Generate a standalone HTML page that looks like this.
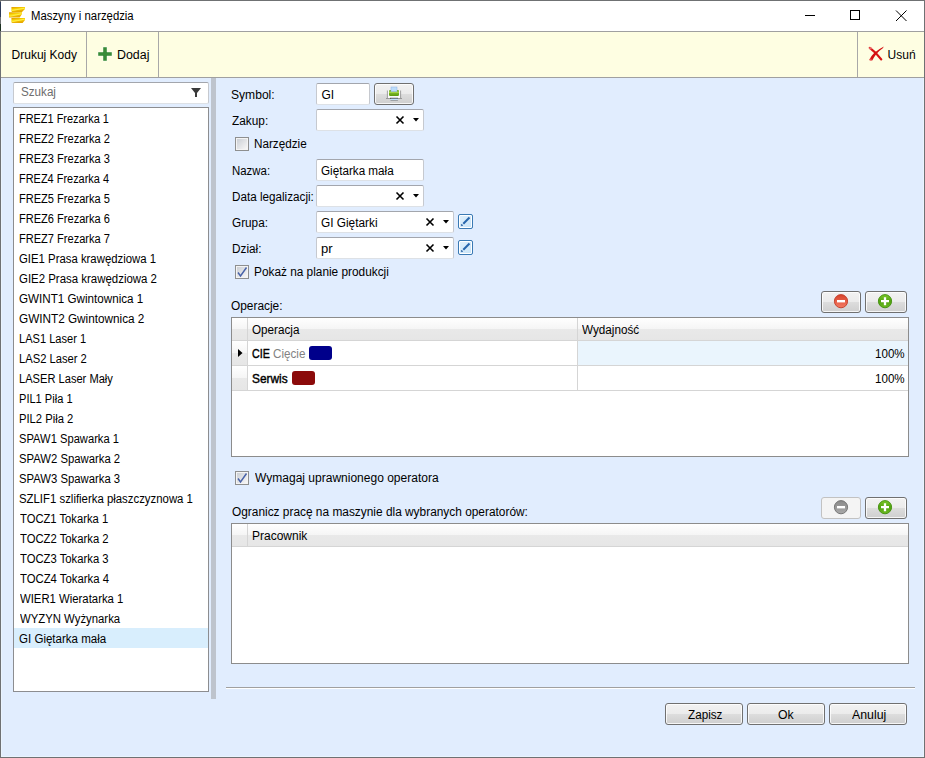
<!DOCTYPE html>
<html><head><meta charset="utf-8">
<style>
*{margin:0;padding:0;box-sizing:border-box}
html,body{width:925px;height:758px;overflow:hidden;background:#e1edfe}
body{position:relative;font-family:"Liberation Sans",sans-serif;font-size:12px;color:#000}
.a{position:absolute}
.t{position:absolute;white-space:nowrap;line-height:15px;font-size:12px;transform-origin:0 0}
.tbox{position:absolute;background:#fff;border:1px solid #c6c9cf;border-top-color:#a3a6ad;border-bottom-color:#dde1e6;border-radius:2px}
.list{position:absolute;background:#fff;border:1px solid #8c8d90}
.btn{position:absolute;border:1px solid #707070;border-radius:3px;background:linear-gradient(#f2f2f2 0%,#ebebeb 50%,#dddddd 50%,#cfcfcf 100%);box-shadow:inset 0 0 0 1px rgba(255,255,255,.8)}
.chk{position:absolute;width:14px;height:14px;border:1px solid #8e8f8f;background:#f4f4f4}
.chk i{position:absolute;left:1px;top:1px;width:10px;height:10px;background:linear-gradient(135deg,#cbcfd5 0%,#f7f7f7 100%)}
.grid{position:absolute;background:#fff;border:1px solid #8c8c8c}
.hd{position:absolute;background:linear-gradient(#ffffff 0%,#f5f5f5 50%,#e9e9e9 50%,#e6e6e6 100%)}
.hl{position:absolute;background:#d5d5d5}
.edit{position:absolute;width:15px;height:15px;border:1px solid #3a7ab4;border-radius:2px;background:linear-gradient(135deg,#e2f1fc,#c6e3f8);box-shadow:inset 0 0 0 1px #fff}
svg{position:absolute;overflow:visible}


</style></head><body>
<!-- window frame -->
<div class="a" style="left:0;top:0;width:925px;height:758px;border:1px solid #6f7173;background:#e1edfe"></div>
<div class="a" style="left:1px;top:78px;width:923px;height:679px;border:1px solid #eaf4fe;border-top:0"></div>
<div class="a" style="left:1px;top:1px;width:923px;height:30px;background:#fff"></div>
<div class="a" style="left:1px;top:31px;width:923px;height:47px;background:#fefee2;border-top:1px solid #a0a0a0;border-bottom:1px solid #a0a0a0"></div>
<div class="a" style="left:86px;top:32px;width:1px;height:45px;background:#a8a8a8"></div>
<div class="a" style="left:158px;top:32px;width:1px;height:45px;background:#a8a8a8"></div>
<div class="a" style="left:857px;top:32px;width:1px;height:45px;background:#a8a8a8"></div>

<!-- app icon -->
<svg style="left:0;top:0" width="30" height="30" viewBox="0 0 30 30">
<defs><linearGradient id="gold" x1="0" y1="0" x2="0.35" y2="1"><stop offset="0" stop-color="#dc9600"/><stop offset="0.3" stop-color="#f2c000"/><stop offset="0.55" stop-color="#ffe81a"/><stop offset="0.75" stop-color="#f0b800"/><stop offset="1" stop-color="#e6a800"/></linearGradient></defs>
<polygon points="11.4,7 25,7 25,9 22,12 12,12 11.4,11" fill="url(#gold)"/>
<polygon points="9,12.2 22,12.2 22,14 19.7,17.6 9,17.6" fill="url(#gold)"/>
<polygon points="11.4,18 25,18 25,20 22.6,23 12,23 11.4,22" fill="url(#gold)"/>
<line x1="12" y1="10.6" x2="24.5" y2="8.2" stroke="#fff45a" stroke-width="0.9" opacity=".85"/>
<line x1="9.5" y1="16.4" x2="21.5" y2="13.8" stroke="#fff45a" stroke-width="0.9" opacity=".85"/>
<line x1="12" y1="21.8" x2="24.5" y2="19.2" stroke="#fff45a" stroke-width="0.9" opacity=".85"/>
</svg>
<div class="a" style="left:0;top:2px;width:1px;height:15px;background:#2c3a58"></div>
<div class="a" style="left:0;top:24px;width:1px;height:7px;background:#1c3020"></div>
<!-- window controls -->
<div class="a" style="left:805px;top:15px;width:10px;height:1px;background:#000"></div>
<div class="a" style="left:850px;top:10px;width:10px;height:10px;border:1px solid #000"></div>
<svg style="left:895px;top:9px" width="13" height="13" viewBox="0 0 13 13"><path d="M1,1.5 L11.5,12 M11.5,1.5 L1,12" stroke="#000" stroke-width="1"/></svg>

<!-- toolbar icons -->
<svg style="left:97px;top:46px" width="16" height="16" viewBox="0 0 16 16">
<path d="M6,1 h4 v5 h5 v4 h-5 v5 h-4 v-5 h-5 v-4 h5 z" fill="#388c38" stroke="#fff" stroke-width="0.6" stroke-opacity=".7"/>
</svg>
<svg style="left:866px;top:44px" width="20" height="20" viewBox="0 0 20 20">
<path d="M3.8,3.9 Q9.5,8 15.2,15.4" stroke="#d81414" stroke-width="2.3" fill="none" stroke-linecap="round"/>
<path d="M17.9,2.5 L16.8,4.2 Q10,8.8 6.2,16.6 L3.2,16.0 Q6.5,8.2 17.9,2.5 Z" fill="#d41010"/>
<circle cx="4.5" cy="4.3" r="1.3" fill="#f07a7a" opacity=".8"/>
<circle cx="4.6" cy="15.8" r="1.2" fill="#f06868" opacity=".7"/>
</svg>

<!-- left panel -->
<div class="tbox" style="left:13px;top:82px;width:196px;height:22px"></div>
<svg style="left:0;top:0" width="1" height="1"><polygon points="191,88 201,88 197,93 197,97 195,97 195,93" fill="#3a3a3a"/></svg>
<div class="list" style="left:13px;top:107px;width:196px;height:585px"></div>
<div class="a" style="left:14px;top:628px;width:194px;height:20px;background:#d8eefd"></div>
<div class="a" style="left:211px;top:78px;width:5px;height:621px;background:#bec4cd"></div>

<!-- form -->
<div class="tbox" style="left:316px;top:83px;width:54px;height:22px"></div>
<div class="btn" style="left:374px;top:83px;width:40px;height:22px"></div>
<svg style="left:0;top:0" width="1" height="1">
<defs><linearGradient id="pg" x1="0" y1="0" x2="0" y2="1"><stop offset="0" stop-color="#5c9e0c"/><stop offset="0.4" stop-color="#a8d84a"/><stop offset="0.55" stop-color="#78b424"/><stop offset="1" stop-color="#5a9a0e"/></linearGradient></defs>
<rect x="387.6" y="90.2" width="12.8" height="8" fill="#fafafa"/>
<path d="M387.4,90.5 L387.4,98.3 M400.6,90.5 L400.6,98.3" stroke="#8a8a8a" stroke-width="0.8"/>
<rect x="389" y="90" width="10" height="6" rx="1.2" fill="url(#pg)"/>
<rect x="391" y="87" width="6" height="4.6" fill="#bcdcfa" stroke="#8fb2e6" stroke-width="0.5"/>
<rect x="386" y="98" width="16" height="0.8" fill="#8a8a8a"/>
<rect x="390" y="97.8" width="8" height="1.2" fill="#3a3a3a"/>
<rect x="390.5" y="98.6" width="7.4" height="1.8" fill="#c2e2fb"/>
<rect x="390.5" y="100.2" width="7.4" height="0.7" fill="#8a8a8a"/>
</svg>

<div class="tbox" style="left:316px;top:109px;width:108px;height:22px"></div>
<div class="chk" style="left:235px;top:137px"><i></i></div>
<div class="tbox" style="left:316px;top:159px;width:108px;height:22px"></div>
<div class="tbox" style="left:316px;top:185px;width:108px;height:22px"></div>
<div class="tbox" style="left:316px;top:211px;width:138px;height:22px"></div>
<div class="tbox" style="left:316px;top:237px;width:138px;height:22px"></div>
<svg style="left:0;top:0" width="1" height="1">
<g stroke="#000" stroke-width="1.6">
<path d="M396.5,116.5 L403.5,123.5 M403.5,116.5 L396.5,123.5"/>
<path d="M396.5,192.5 L403.5,199.5 M403.5,192.5 L396.5,199.5"/>
<path d="M426.5,218.5 L433.5,225.5 M433.5,218.5 L426.5,225.5"/>
<path d="M426.5,244.5 L433.5,251.5 M433.5,244.5 L426.5,251.5"/>
</g>
<g fill="#000">
<polygon points="413,118 419,118 416,121.5"/>
<polygon points="413,194 419,194 416,197.5"/>
<polygon points="443,220 449,220 446,223.5"/>
<polygon points="443,246 449,246 446,249.5"/>
</g>
</svg>
<div class="edit" style="left:458px;top:214px"></div>
<div class="edit" style="left:458px;top:240px"></div>
<svg style="left:0;top:0" width="1" height="1">
<path d="M463.3,223.7 L469.5,217.5 M463.3,249.7 L469.5,243.5" stroke="#2766ac" stroke-width="2"/>
<path d="M461.3,225.7 L462.4,224.6 M461.3,251.7 L462.4,250.6" stroke="#1d5aa0" stroke-width="1.8"/>
</svg>
<div class="chk" style="left:235px;top:265px"><i></i></div>
<svg style="left:0;top:0" width="1" height="1"><path d="M238,272.5 L240.5,276 L246.5,267.5" stroke="#4862a8" stroke-width="1.45" fill="none"/></svg>

<!-- op buttons -->
<div class="btn" style="left:821px;top:291px;width:40px;height:22px"></div>
<div class="btn" style="left:865px;top:291px;width:42px;height:22px"></div>
<svg style="left:0;top:0" width="1" height="1">
<defs>
<linearGradient id="rg" x1="0" y1="0" x2="0" y2="1"><stop offset="0" stop-color="#d8442c"/><stop offset="1" stop-color="#f47a62"/></linearGradient>
<linearGradient id="gg" x1="0" y1="0" x2="0" y2="1"><stop offset="0" stop-color="#7cc82a"/><stop offset="0.5" stop-color="#52a410"/><stop offset="1" stop-color="#6cb820"/></linearGradient>
<linearGradient id="yg" x1="0" y1="0" x2="0" y2="1"><stop offset="0" stop-color="#8a8a8a"/><stop offset="1" stop-color="#a8a8a8"/></linearGradient>
</defs>
<circle cx="841" cy="301.2" r="6.6" fill="url(#rg)" stroke="#c23a26" stroke-width="0.9"/>
<rect x="837" y="300" width="8" height="2.4" fill="#fff"/>
<circle cx="885" cy="301.2" r="6.6" fill="url(#gg)" stroke="#3e8c0a" stroke-width="0.9"/>
<path d="M881,301.2 h8 M885,297.2 v8" stroke="#fff" stroke-width="2.3"/>
</svg>

<!-- grid 1 -->
<div class="grid" style="left:231px;top:317px;width:678px;height:140px"></div>
<div class="hd" style="left:232px;top:318px;width:676px;height:22px"></div>
<div class="hl" style="left:232px;top:340px;width:676px;height:1px"></div>
<div class="hd" style="left:232px;top:341px;width:15px;height:24px"></div>
<div class="hd" style="left:232px;top:366px;width:15px;height:24px"></div>
<div class="hl" style="left:247px;top:318px;width:1px;height:72px"></div>
<div class="a" style="left:578px;top:341px;width:330px;height:24px;background:#eaf5fd"></div>
<div class="hl" style="left:577px;top:318px;width:1px;height:72px"></div>
<div class="hl" style="left:232px;top:365px;width:676px;height:1px"></div>
<div class="hl" style="left:232px;top:390px;width:676px;height:1px"></div>
<svg style="left:0;top:0" width="1" height="1"><polygon points="238,349 242.5,353 238,357" fill="#000"/></svg>
<div class="a" style="left:309px;top:346px;width:23px;height:14px;background:#00008b;border-radius:3px"></div>
<div class="a" style="left:292px;top:371px;width:23px;height:14px;background:#8b0a0a;border-radius:3px"></div>

<div class="chk" style="left:235px;top:471px"><i></i></div>
<svg style="left:0;top:0" width="1" height="1"><path d="M238,478.5 L240.5,482 L246.5,473.5" stroke="#4862a8" stroke-width="1.45" fill="none"/></svg>

<div class="a" style="left:821px;top:497px;width:40px;height:22px;border:1px solid #c2c2c2;border-radius:3px;background:#f4f4f4"></div>
<div class="btn" style="left:865px;top:497px;width:42px;height:22px"></div>
<svg style="left:0;top:0" width="1" height="1">
<circle cx="841" cy="507.2" r="6.6" fill="url(#yg)" stroke="#6e6e6e" stroke-width="0.9"/>
<rect x="837" y="506" width="8" height="2.4" fill="#fff"/>
<circle cx="885" cy="507.2" r="6.6" fill="url(#gg)" stroke="#3e8c0a" stroke-width="0.9"/>
<path d="M881,507.2 h8 M885,503.2 v8" stroke="#fff" stroke-width="2.3"/>
</svg>

<!-- grid 2 -->
<div class="grid" style="left:231px;top:523px;width:678px;height:141px"></div>
<div class="hd" style="left:232px;top:524px;width:676px;height:22px"></div>
<div class="hl" style="left:232px;top:546px;width:676px;height:1px"></div>
<div class="hl" style="left:247px;top:524px;width:1px;height:22px"></div>

<!-- bottom -->
<div class="a" style="left:226px;top:687px;width:689px;height:1px;background:#a0a0a0"></div>
<div class="a" style="left:226px;top:688px;width:689px;height:1px;background:#fff"></div>
<div class="btn" style="left:665px;top:703px;width:78px;height:22px"></div>
<div class="btn" style="left:747px;top:703px;width:78px;height:22px"></div>
<div class="btn" style="left:829px;top:703px;width:78px;height:22px"></div>

<div class="t" id="title" style="left:30.66px;top:9px;transform:scaleX(0.9444);">Maszyny i narzędzia</div>
<div class="t" id="tb1" style="left:11.60px;top:48px;transform:scaleX(1.0000);">Drukuj Kody</div>
<div class="t" id="tb2" style="left:116.57px;top:48px;transform:scaleX(1.0333);">Dodaj</div>
<div class="t" id="tb3" style="left:887.60px;top:48px;transform:scaleX(1.0000);">Usuń</div>
<div class="t" id="szuk" style="left:20.63px;top:85px;transform:scaleX(0.9706);color:#6d6d6d">Szukaj</div>
<div class="t" id="li0" style="left:18.69px;top:112px;transform:scaleX(0.9103);">FREZ1 Frezarka 1</div>
<div class="t" id="li1" style="left:18.68px;top:132px;transform:scaleX(0.9216);">FREZ2 Frezarka 2</div>
<div class="t" id="li2" style="left:18.68px;top:152px;transform:scaleX(0.9216);">FREZ3 Frezarka 3</div>
<div class="t" id="li3" style="left:18.69px;top:172px;transform:scaleX(0.9122);">FREZ4 Frezarka 4</div>
<div class="t" id="li4" style="left:18.68px;top:192px;transform:scaleX(0.9216);">FREZ5 Frezarka 5</div>
<div class="t" id="li5" style="left:18.68px;top:212px;transform:scaleX(0.9216);">FREZ6 Frezarka 6</div>
<div class="t" id="li6" style="left:18.68px;top:232px;transform:scaleX(0.9216);">FREZ7 Frezarka 7</div>
<div class="t" id="li7" style="left:18.65px;top:252px;transform:scaleX(0.9469);">GIE1 Prasa krawędziowa 1</div>
<div class="t" id="li8" style="left:18.65px;top:272px;transform:scaleX(0.9531);">GIE2 Prasa krawędziowa 2</div>
<div class="t" id="li9" style="left:18.63px;top:292px;transform:scaleX(0.9709);">GWINT1 Gwintownica 1</div>
<div class="t" id="li10" style="left:18.62px;top:312px;transform:scaleX(0.9795);">GWINT2 Gwintownica 2</div>
<div class="t" id="li11" style="left:18.68px;top:332px;transform:scaleX(0.9239);">LAS1 Laser 1</div>
<div class="t" id="li12" style="left:18.67px;top:352px;transform:scaleX(0.9324);">LAS2 Laser 2</div>
<div class="t" id="li13" style="left:18.67px;top:372px;transform:scaleX(0.9260);">LASER Laser Mały</div>
<div class="t" id="li14" style="left:18.68px;top:392px;transform:scaleX(0.9228);">PIL1 Piła 1</div>
<div class="t" id="li15" style="left:18.66px;top:412px;transform:scaleX(0.9351);">PIL2 Piła 2</div>
<div class="t" id="li16" style="left:18.67px;top:432px;transform:scaleX(0.9311);">SPAW1 Spawarka 1</div>
<div class="t" id="li17" style="left:18.66px;top:452px;transform:scaleX(0.9415);">SPAW2 Spawarka 2</div>
<div class="t" id="li18" style="left:18.66px;top:472px;transform:scaleX(0.9415);">SPAW3 Spawarka 3</div>
<div class="t" id="li19" style="left:18.65px;top:492px;transform:scaleX(0.9484);">SZLIF1 szlifierka płaszczyznowa 1</div>
<div class="t" id="li20" style="left:19.60px;top:512px;transform:scaleX(0.9351);">TOCZ1 Tokarka 1</div>
<div class="t" id="li21" style="left:19.60px;top:532px;transform:scaleX(0.9394);">TOCZ2 Tokarka 2</div>
<div class="t" id="li22" style="left:19.60px;top:552px;transform:scaleX(0.9394);">TOCZ3 Tokarka 3</div>
<div class="t" id="li23" style="left:19.60px;top:572px;transform:scaleX(0.9436);">TOCZ4 Tokarka 4</div>
<div class="t" id="li24" style="left:19.60px;top:592px;transform:scaleX(0.9450);">WIER1 Wieratarka 1</div>
<div class="t" id="li25" style="left:19.60px;top:612px;transform:scaleX(0.9453);">WYZYN Wyżynarka</div>
<div class="t" id="li26" style="left:18.64px;top:632px;transform:scaleX(0.9622);">GI Giętarka mała</div>
<div class="t" id="l_sym" style="left:230.59px;top:88px;transform:scaleX(1.0073);">Symbol:</div>
<div class="t" id="v_sym" style="left:321.40px;top:88px;transform:scaleX(1.0000);">GI</div>
<div class="t" id="l_zak" style="left:231.60px;top:114px;transform:scaleX(0.9861);">Zakup:</div>
<div class="t" id="l_narz" style="left:253.61px;top:137px;transform:scaleX(0.9755);">Narzędzie</div>
<div class="t" id="l_naz" style="left:231.62px;top:164px;transform:scaleX(0.9513);">Nazwa:</div>
<div class="t" id="v_naz" style="left:321.42px;top:164px;transform:scaleX(0.9730);">Giętarka mała</div>
<div class="t" id="l_data" style="left:231.61px;top:190px;transform:scaleX(0.9735);">Data legalizacji:</div>
<div class="t" id="l_grp" style="left:231.61px;top:216px;transform:scaleX(0.9800);">Grupa:</div>
<div class="t" id="v_grp" style="left:320.61px;top:216px;transform:scaleX(0.9857);">GI Giętarki</div>
<div class="t" id="l_dz" style="left:231.61px;top:242px;transform:scaleX(0.9828);">Dział:</div>
<div class="t" id="v_dz" style="left:320.56px;top:242px;transform:scaleX(1.0900);">pr</div>
<div class="t" id="l_pok" style="left:253.61px;top:265px;transform:scaleX(0.9860);">Pokaż na planie produkcji</div>
<div class="t" id="l_op" style="left:230.61px;top:299px;transform:scaleX(0.9900);">Operacje:</div>
<div class="t" id="h_op" style="left:252.02px;top:323px;transform:scaleX(0.9729);">Operacja</div>
<div class="t" id="h_wyd" style="left:582.41px;top:323px;transform:scaleX(0.9759);">Wydajność</div>
<div class="t" id="c_cie" style="left:252.09px;top:347px;transform:scaleX(0.8895);-webkit-text-stroke:0.4px #000">CIE</div>
<div class="t" id="c_ciec" style="left:272.63px;top:347px;transform:scaleX(0.9719);color:#828282">Cięcie</div>
<div class="t" id="c_100a" style="left:875.24px;top:347px;transform:scaleX(0.9655);">100%</div>
<div class="t" id="c_ser" style="left:252.01px;top:372px;transform:scaleX(0.9886);-webkit-text-stroke:0.4px #000">Serwis</div>
<div class="t" id="c_100b" style="left:875.24px;top:372px;transform:scaleX(0.9655);">100%</div>
<div class="t" id="l_wym" style="left:254.60px;top:471px;transform:scaleX(1.0016);">Wymagaj uprawnionego operatora</div>
<div class="t" id="l_ogr" style="left:231.60px;top:505px;transform:scaleX(0.9902);">Ogranicz pracę na maszynie dla wybranych operatorów:</div>
<div class="t" id="h_prac" style="left:252.00px;top:529px;transform:scaleX(1.0000);">Pracownik</div>
<div class="t" id="b_zap" style="left:687.60px;top:708px;transform:scaleX(0.9743);">Zapisz</div>
<div class="t" id="b_ok" style="left:778.38px;top:708px;transform:scaleX(1.0214);">Ok</div>
<div class="t" id="b_an" style="left:851.60px;top:708px;transform:scaleX(1.0273);">Anuluj</div>
</body></html>
